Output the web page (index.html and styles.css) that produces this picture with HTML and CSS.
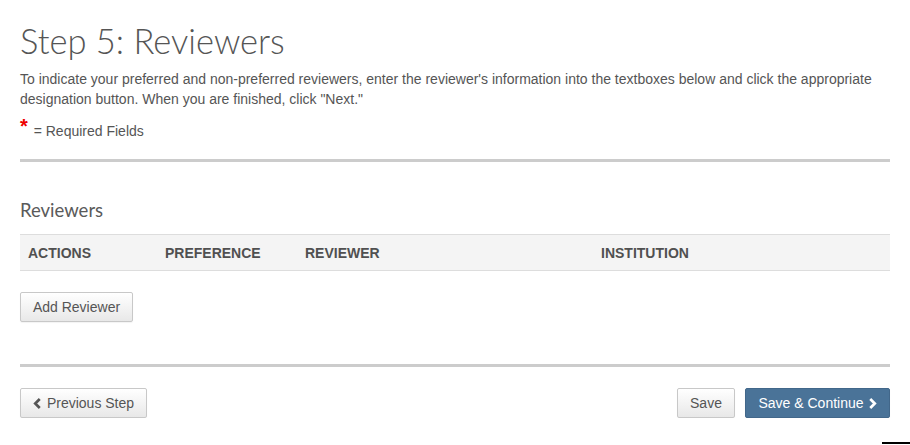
FILE: index.html
```html
<!DOCTYPE html>
<html>
<head>
<meta charset="utf-8">
<link rel="stylesheet" href="styles.css">
</head>
<body>
<div class="page">
  <h1 class="title">Step 5: Reviewers</h1>
  <p class="intro">To indicate your preferred and non-preferred reviewers, enter the reviewer's information into the textboxes below and click the appropriate designation button. When you are finished, click "Next."</p>
  <p class="required"><span class="star">*</span> = Required Fields</p>
  <div class="rule"></div>
  <h2 class="section">Reviewers</h2>
  <div class="table-head">
    <div class="col c1">ACTIONS</div>
    <div class="col c2">PREFERENCE</div>
    <div class="col c3">REVIEWER</div>
    <div class="col c4">INSTITUTION</div>
  </div>
  <button class="btn add">Add Reviewer</button>
  <div class="rule rule2"></div>
  <div class="footer">
    <button class="btn prev"><svg class="chev" viewBox="0 0 10 12" width="9" height="11"><path d="M7.5 1 L2.5 6 L7.5 11" fill="none" stroke="currentColor" stroke-width="3"/></svg>Previous Step</button>
    <div class="right">
      <button class="btn save">Save</button>
      <button class="btn primary">Save &amp; Continue<svg class="chev r" viewBox="0 0 10 12" width="9" height="11"><path d="M2.5 1 L7.5 6 L2.5 11" fill="none" stroke="currentColor" stroke-width="3"/></svg></button>
    </div>
  </div>
</div>
<div class="corner"></div>
</body>
</html>
```
FILE: styles.css
```css
html, body { margin: 0; padding: 0; background: #fff; }
body { font-family: "Liberation Sans", Arial, sans-serif; color: #555; font-size: 14px; }
.page { padding: 0 20px; width: 870px; }
.title {
  font-family: Lato, sans-serif; font-weight: 300; font-size: 34.5px; color: #555;
  margin: 0; padding-top: 21px; line-height: 40px;
}
.intro { margin: 8px 0 0; line-height: 20px; }
.required { margin: 10px 0 0; line-height: 20px; }
.star { color: #e00; font-size: 20px; font-weight: bold; position: relative; top: -3px; margin-right: 2px; }
.rule { height: 3px; background: #ccc; margin-top: 18px; }
.section {
  font-family: Lato, sans-serif; font-weight: 400; font-size: 18.5px; color: #5a5a5a;
  margin: 36px 0 0; line-height: 24px;
}
.table-head {
  display: flex; margin-top: 12px; height: 35px; align-items: center;
  background: #f4f4f4; border-top: 1px solid #ddd; border-bottom: 1px solid #ddd;
  font-weight: bold; font-size: 14px; color: #505050;
}
.col { padding: 0 8px; box-sizing: border-box; white-space: nowrap; }
.c1 { width: 137px; }
.c2 { width: 140px; }
.c3 { width: 296px; }
.btn {
  font-family: "Liberation Sans", Arial, sans-serif; font-size: 14px; color: #555;
  background: linear-gradient(#fff, #e8e8e8); border: 1px solid #c8c8c8; border-radius: 2px;
  height: 30px; padding: 0; display: inline-flex; align-items: center; justify-content: center;
  white-space: nowrap; cursor: pointer; box-sizing: border-box;
  box-shadow: 0 1px 1px rgba(0,0,0,0.05);
}
.add { margin-top: 21px; width: 113px; }
.rule2 { margin-top: 42px; }
.footer { display: flex; justify-content: space-between; margin-top: 21px; }
.prev { width: 127px; }
.chev { margin-right: 5px; flex: none; }
.chev.r { margin-right: 0; margin-left: 4px; }
.right { display: flex; gap: 10px; }
.save { width: 58px; }
.primary {
  background: #4a7398; border-color: #42678a; color: #fff; width: 145px;
}
.corner { position: absolute; left: 882px; top: 442px; width: 28px; height: 2px; background: #000; }
```
